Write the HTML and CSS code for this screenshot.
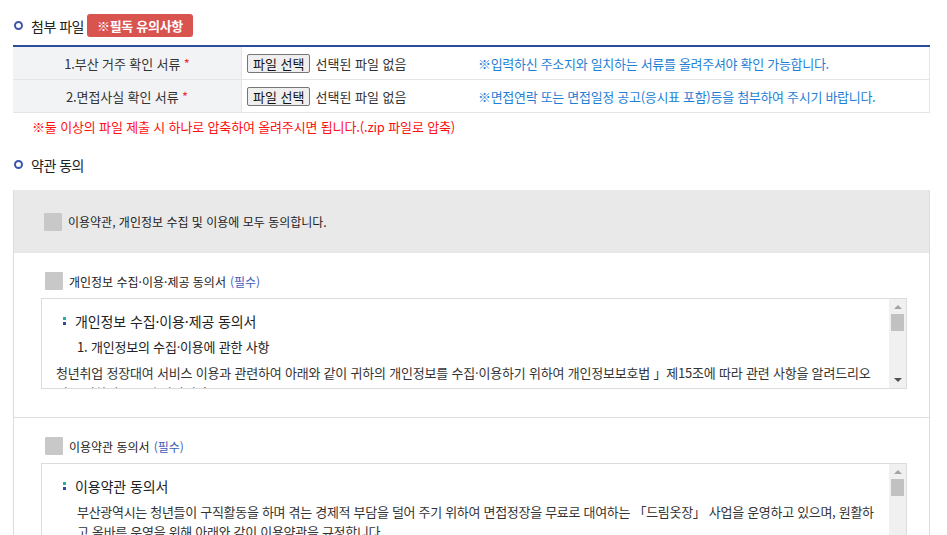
FILE: index.html
```html
<!DOCTYPE html>
<html lang="ko">
<head>
<meta charset="utf-8">
<link rel="stylesheet" href="styles.css">
</head>
<body>
<div class="page">
  <div class="sec-title first">
    <span class="ring"></span><span class="sec-text">첨부 파일</span>
    <span class="badge">※필독 유의사항</span>
  </div>
  <table class="ftable">
    <tr>
      <th>1.부산 거주 확인 서류 <span class="req">*</span></th>
      <td class="fcell"><span class="fbtn">파일 선택</span><span class="fname">선택된 파일 없음</span></td>
      <td class="note">※입력하신 주소지와 일치하는 서류를 올려주셔야 확인 가능합니다.</td>
    </tr>
    <tr>
      <th>2.면접사실 확인 서류 <span class="req">*</span></th>
      <td class="fcell"><span class="fbtn">파일 선택</span><span class="fname">선택된 파일 없음</span></td>
      <td class="note">※면접연락 또는 면접일정 공고(응시표 포함)등을 첨부하여 주시기 바랍니다.</td>
    </tr>
  </table>
  <p class="warn">※둘 이상의 파일 제출 시 하나로 압축하여 올려주시면 됩니다.(.zip 파일로 압축)</p>

  <div class="sec-title second">
    <span class="ring"></span><span class="sec-text">약관 동의</span>
  </div>

  <div class="agree">
    <div class="all">
      <span class="chk"></span><span class="all-text">이용약관, 개인정보 수집 및 이용에 모두 동의합니다.</span>
    </div>
    <div class="item">
      <div class="item-head"><span class="chk"></span><span class="item-text">개인정보 수집·이용·제공 동의서</span> <span class="must">(필수)</span></div>
      <div class="sbox">
        <div class="sbox-body">
          <div class="doc-title"><span class="dots"><i class="d1"></i><i class="d2"></i></span>개인정보 수집·이용·제공 동의서</div>
          <div class="doc-sub">1. 개인정보의 수집·이용에 관한 사항</div>
          <p class="doc-p">청년취업 정장대여 서비스 이용과 관련하여 아래와 같이 귀하의 개인정보를 수집·이용하기 위하여 개인정보보호법 」제15조에 따라 관련 사항을 알려드리오니 동의하여 주시기 바랍니다.</p>
        </div>
        <div class="sbar"><span class="up"></span><span class="thumb"></span><span class="grow"></span><span class="down"></span></div>
      </div>
    </div>
    <div class="item">
      <div class="item-head"><span class="chk"></span><span class="item-text">이용약관 동의서</span> <span class="must">(필수)</span></div>
      <div class="sbox">
        <div class="sbox-body">
          <div class="doc-title"><span class="dots"><i class="d1"></i><i class="d2"></i></span>이용약관 동의서</div>
          <p class="doc-p ind">부산광역시는 청년들이 구직활동을 하며 겪는 경제적 부담을 덜어 주기 위하여 면접정장을 무료로 대여하는 「드림옷장」 사업을 운영하고 있으며, 원활하고 올바른 운영을 위해 아래와 같이 이용약관을 규정합니다.</p>
        </div>
        <div class="sbar"><span class="up"></span><span class="thumb"></span><span class="grow"></span><span class="down"></span></div>
      </div>
    </div>
  </div>
</div>
</body>
</html>
```

FILE: styles.css
```css
html, body {
  margin: 0;
  padding: 0;
  background: #fff;
}
body {
  font-family: "Noto Sans CJK KR", "Noto Sans", sans-serif;
  font-size: 13px;
  color: #333;
  overflow: hidden;
  height: 535px;
}
.page {
  width: 917px;
  margin-left: 13px;
}
.sec-title {
  display: flex;
  align-items: center;
  height: 23px;
}
.sec-title.first {
  margin-top: 14px;
}
.sec-title.second {
  margin-top: 17px;
}
.ring {
  width: 5px;
  height: 5px;
  border: 2px solid #3c55ae;
  border-radius: 50%;
  margin-left: 1px;
  margin-right: 8px;
}
.sec-text {
  font-size: 14px;
  color: #222;
  letter-spacing: -0.5px;
}
.badge {
  margin-left: 3px;
  background: #d9534f;
  color: #fff;
  font-weight: bold;
  font-size: 13px;
  height: 23px;
  line-height: 23px;
  padding: 0 10px;
  border-radius: 3px;
  letter-spacing: -0.3px;
}
.ftable {
  margin-top: 8px;
  width: 917px;
  border-collapse: collapse;
  border-top: 2px solid #2e4c9c;
}
.ftable th, .ftable td {
  height: 32px;
  padding: 0;
  border-bottom: 1px solid #e3e5e8;
  font-weight: normal;
}
.ftable th {
  width: 228px;
  background: #f2f3f5;
  border-right: 1px solid #e3e5e8;
  text-align: center;
  color: #333;
  letter-spacing: -0.1px;
}
.ftable tr td:last-child {
  border-right: 1px solid #e3e5e8;
}
.req {
  color: #e8323c;
}
.fcell {
  width: 228px;
  padding-left: 5px !important;
  white-space: nowrap;
}
.fbtn {
  display: inline-block;
  border: 1px solid #767676;
  border-radius: 2px;
  background: #efefef;
  color: #111;
  font-size: 13px;
  line-height: 17px;
  padding: 0 5px;
  vertical-align: middle;
}
.fname {
  margin-left: 5px;
  color: #333;
  vertical-align: middle;
}
.note {
  color: #1f7fd6;
  padding-left: 3px !important;
  letter-spacing: -0.3px;
}
.warn {
  margin: 5px 0 0 19px;
  color: #ff1010;
  font-size: 13px;
  line-height: 18px;
  letter-spacing: -0.15px;
}
.agree {
  margin-top: 14px;
  border-left: 1px solid #dcdcdc;
  border-right: 1px solid #dcdcdc;
}
.all {
  background: #e9e9e9;
  height: 63px;
  display: flex;
  align-items: center;
  padding-left: 30px;
}
.chk {
  width: 18px;
  height: 18px;
  background: #c8c8c8;
  border: 0;
  border-radius: 1px;
  flex: none;
}
.all-text {
  margin-left: 6px;
  color: #222;
  font-size: 12px;
}
.item {
  padding: 19px 22px 28px 27px;
  border-bottom: 1px solid #dedede;
}
.item-head {
  display: flex;
  align-items: center;
  height: 18px;
  padding-left: 4px;
  margin-bottom: 8px;
}
.item-text {
  margin-left: 6px;
  color: #222;
  font-size: 12px;
}
.must {
  color: #3b5db8;
  margin-left: 4px;
  font-size: 12px;
}
.sbox {
  border: 1px solid #dcdcdc;
  height: 89px;
  display: flex;
  background: #fff;
}
.sbox-body {
  flex: 1;
  overflow: hidden;
  padding: 10px 14px 0 14px;
}
.doc-title {
  display: flex;
  align-items: center;
  font-size: 14px;
  color: #222;
  height: 24px;
  padding-left: 7px;
  letter-spacing: -0.1px;
}
.dots {
  display: flex;
  flex-direction: column;
  gap: 2px;
  margin-right: 9px;
}
.dots i {
  display: block;
  width: 3px;
  height: 3px;
}
.d1 { background: #23b0a6; }
.d2 { background: #2e4c9c; }
.doc-sub {
  padding-left: 21px;
  margin-top: 2px;
  height: 24px;
  line-height: 24px;
  color: #222;
  letter-spacing: -0.2px;
}
.doc-p {
  margin: 4px 0 0 0;
  line-height: 20px;
  color: #333;
  letter-spacing: -0.2px;
}
.doc-p.ind {
  padding-left: 21px;
  letter-spacing: -0.3px;
}
.sbar {
  width: 17px;
  background: #f0f0f0;
  display: flex;
  flex-direction: column;
  align-items: center;
  flex: none;
}
.up {
  margin-top: 6px;
  width: 0;
  height: 0;
  border-left: 4px solid transparent;
  border-right: 4px solid transparent;
  border-bottom: 4px solid #a3a3a3;
}
.thumb {
  margin-top: 5px;
  width: 13px;
  height: 17px;
  background: #c1c1c1;
}
.grow {
  flex: 1;
}
.down {
  margin-bottom: 6px;
  width: 0;
  height: 0;
  border-left: 4px solid transparent;
  border-right: 4px solid transparent;
  border-top: 4px solid #505050;
}
```
